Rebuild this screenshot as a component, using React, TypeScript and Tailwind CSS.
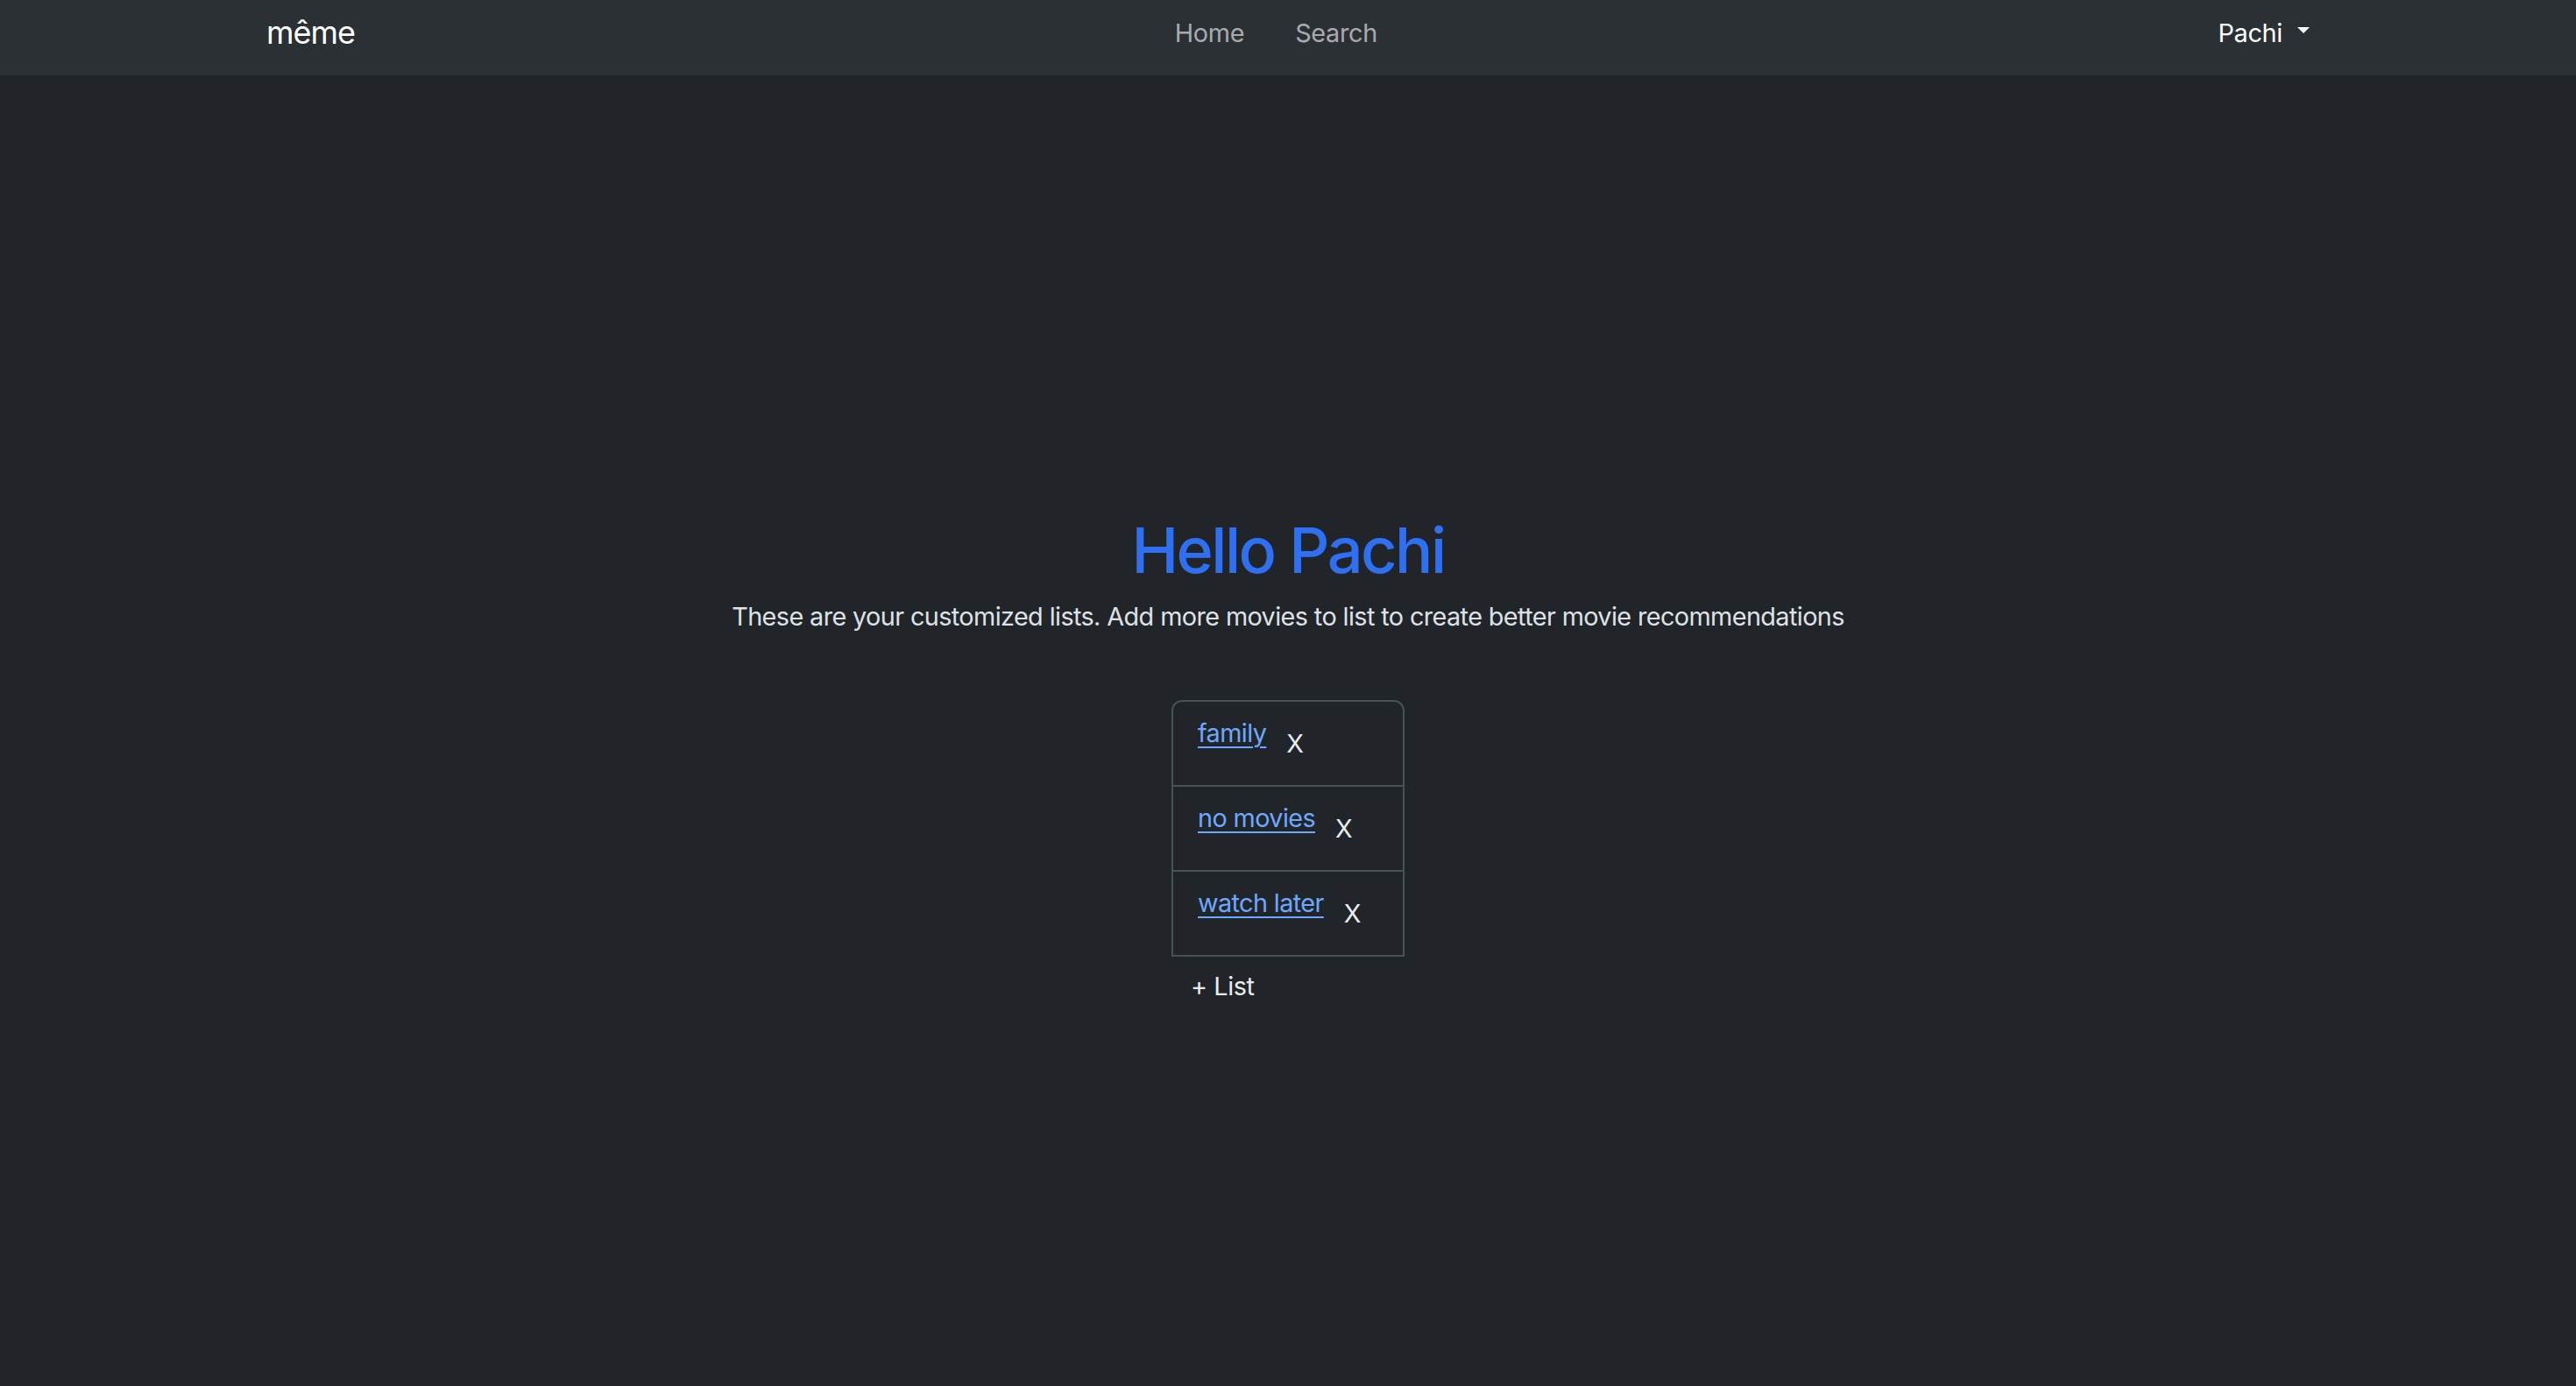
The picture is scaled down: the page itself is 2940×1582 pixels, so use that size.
import React from "react";

const lists = ["family", "no movies", "watch later"];

export default function App() {
  return (
    <div
      className="min-h-[1582px] w-full bg-[#212529] text-[#dee2e6]"
      style={{ fontFamily: "Inter, 'Noto Sans', sans-serif" }}
    >
      <nav className="h-[86px] bg-[#2b3035]">
        <div className="mx-auto flex h-full w-[2376px] items-center px-[22px] pb-[12px]">
          <a className="text-[36px] leading-[54px] text-white tracking-[-1px]" href="#">
            même
          </a>
          <div className="mx-auto flex items-center gap-[58px] pr-[24px] text-[28.8px] leading-[43px] tracking-[-0.3px] text-[rgba(255,255,255,0.6)]">
            <a href="#">Home</a>
            <a href="#">Search</a>
          </div>
          <div className="flex items-center gap-[17px] text-[28.8px] leading-[43px] tracking-[-0.3px] text-white">
            <span>Pachi</span>
            <span className="mb-[6px] h-0 w-0 border-x-[7px] border-t-[7px] border-x-transparent border-t-white" />
          </div>
        </div>
      </nav>

      <main className="flex flex-col items-center pt-[499px]">
        <h1 className="text-[72px] leading-[86px] font-medium text-[#2f70f2] tracking-[-2.5px]">
          Hello Pachi
        </h1>
        <p className="mt-[11px] whitespace-nowrap text-[28.8px] leading-[43px] tracking-[-0.6px]">
          These are your customized lists. Add more movies to list to create better movie recommendations
        </p>

        <div className="mt-[74px] w-[266px]">
          <ul className="overflow-hidden rounded-t-[12px] border-2 border-b-0 border-[#495057]">
            {lists.map((name, i) => (
              <li
                key={name}
                className={`flex items-start whitespace-nowrap px-[28px] pt-[14px] pb-[14px] ${i < lists.length - 1 ? "border-b-2 border-[#495057]" : ""}`}
              >
                <a
                  href="#"
                  className="text-[28.8px] leading-[43px] text-[#6ea8fe] underline decoration-[2px] underline-offset-[5px] tracking-[-0.6px]"
                >
                  {name}
                </a>
                <button className="border-2 border-transparent px-[21px] py-[10px] text-[28.8px] leading-[43px] text-[#e9ecef]">
                  X
                </button>
              </li>
            ))}
          </ul>
          <div className="border-t-2 border-[#495057]" />
          <div className="px-[22px] pt-[12px] text-[28.8px] leading-[43px] tracking-[-0.4px] text-[#e9ecef]">+ List</div>
        </div>
      </main>
    </div>
  );
}
